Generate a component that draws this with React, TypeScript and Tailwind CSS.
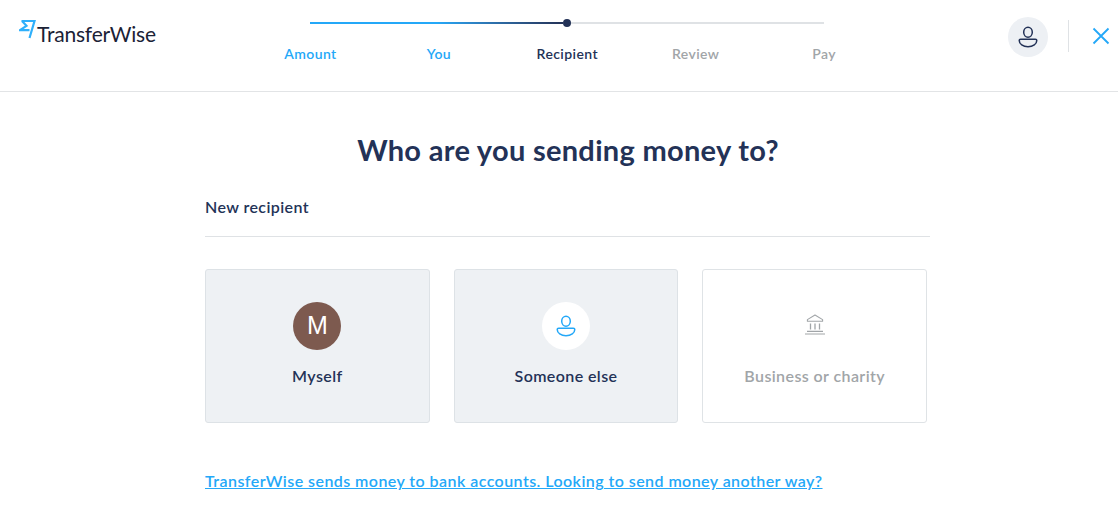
const font = { fontFamily: '"Lato", "Noto Sans", sans-serif' };

const steps = [
  { label: "Amount", className: "text-[#24a8f8]" },
  { label: "You", className: "text-[#24a8f8]" },
  { label: "Recipient", className: "text-[#233257]" },
  { label: "Review", className: "text-[#a1a5a8]" },
  { label: "Pay", className: "text-[#a1a5a8]" },
];

function PersonIcon({ className }: { className: string }) {
  return (
    <svg viewBox="0 0 20 22" fill="none" stroke="currentColor" strokeWidth="1.5" className={`h-[22px] w-5 ${className}`}>
      <ellipse cx="10" cy="6.3" rx="4.3" ry="5" />
      <path
        d="M2.6 13.2h14.8c.9 0 1.4.5 1.4 1.3 0 3.4-3.8 6.2-8.8 6.2s-8.8-2.8-8.8-6.2c0-.8.5-1.3 1.4-1.3z"
        strokeLinejoin="round"
      />
    </svg>
  );
}

function BankIcon() {
  return (
    <svg viewBox="0 0 20 21" fill="none" stroke="#a1a5a8" strokeWidth="1.1" className="mb-[4px] h-[21px] w-5">
      <path d="M10 1 2.4 5.6v1.6h15.2V5.6z" strokeLinejoin="round" />
      <path d="M5.5 9.5v6M10 9.5v6M14.5 9.5v6" strokeWidth="1.3" />
      <path d="M2 17.4h16M0 20h20" />
    </svg>
  );
}

function Card({
  title,
  active,
  children,
}: {
  title: string;
  active: boolean;
  children: React.ReactNode;
}) {
  return (
    <div
      className={`flex h-[154px] flex-col items-center rounded-[3px] border pt-[32px] ${
        active ? "border-[#dde2e6] bg-[#eef1f4]" : "border-[#dfe3e6] bg-white"
      }`}
    >
      <div className="flex h-12 w-12 items-center justify-center rounded-full">{children}</div>
      <div
        className={`mt-[14px] text-[16px] leading-6 font-semibold tracking-[0.4px] ${
          active ? "text-[#233257]" : "text-[#a1a5a8]"
        }`}
      >
        {title}
      </div>
    </div>
  );
}

export default function App() {
  return (
    <div className="h-[513px] w-[1118px] overflow-hidden bg-white" style={font}>
      <header className="flex h-[92px] border-b border-[#e2e4e6]">
        <div className="w-[245.75px] pt-[18px] pl-[19px]">
          <div className="flex items-start">
            <svg viewBox="0 0 18 20" className="mt-[1px] h-5 w-[18px]" fill="none" stroke="#2fb0fb" strokeWidth="2.2">
              <path d="M2.5 2h13L10.5 19M3 2l4.5 4.8L1 11.2h9.5" strokeLinejoin="miter" />
            </svg>
            <span className="mt-[3px] text-[21px] leading-[26px] font-normal tracking-[-0.2px] text-[#1b2236]">
              TransferWise
            </span>
          </div>
        </div>

        <div className="w-[642.5px] pt-[20px]">
          <div className="mx-[64.25px] flex h-[6px] items-center">
            <div className="h-[2px] w-[253px] bg-gradient-to-r from-[#24a8f8] from-50% to-[#233257]" />
            <div className="h-2 w-2 shrink-0 rounded-full bg-[#233257]" />
            <div className="h-[2px] flex-1 bg-[#dfe2e5]" />
          </div>
          <div className="mt-[18px] grid grid-cols-5 pl-[0.5px]">
            {steps.map((s) => (
              <div key={s.label} className={`text-center text-[14px] leading-5 font-semibold tracking-[0.4px] ${s.className}`}>
                {s.label}
              </div>
            ))}
          </div>
        </div>

        <div className="flex flex-1 items-start pt-[17px] pl-[119.75px]">
          <div className="flex h-10 w-10 items-center justify-center rounded-full bg-[#edf0f4]">
            <PersonIcon className="text-[#233257]" />
          </div>
          <div className="mt-[3px] ml-[20px] h-[32px] w-px bg-[#dfe2e5]" />
          <svg viewBox="0 0 18 18" className="mt-[10px] ml-[22.5px] h-[18px] w-[18px]" stroke="#24a8f8" strokeWidth="1.8" fill="none">
            <path d="M1.5 1.5l15 15M16.5 1.5l-15 15" />
          </svg>
        </div>
      </header>

      <main className="ml-[205px] w-[725px]">
        <h1 className="mt-[38px] pl-[1px] text-center text-[29px] leading-[40px] font-bold tracking-[0.3px] text-[#233257]">
          Who are you sending money to?
        </h1>
        <div className="mt-[25px] border-b border-[#dfe2e5] pb-[17px] text-[16px] leading-6 font-semibold tracking-[0.4px] text-[#233257]">
          New recipient
        </div>
        <div className="mt-[32px] grid w-[722px] grid-cols-3 gap-6">
          <Card title="Myself" active>
            <div
              className="flex h-12 w-12 items-center justify-center rounded-full bg-[#7d5a4f] text-[25px] text-white"
              style={{ fontFamily: '"Liberation Sans", sans-serif' }}
            >
              M
            </div>
          </Card>
          <Card title="Someone else" active>
            <div className="flex h-12 w-12 items-center justify-center rounded-full bg-white">
              <PersonIcon className="text-[#24a8f8]" />
            </div>
          </Card>
          <Card title="Business or charity" active={false}>
            <BankIcon />
          </Card>
        </div>
        <a href="#" className="mt-[46px] block text-[16px] leading-6 font-semibold tracking-[0.44px] text-[#24a8f8] underline">
          TransferWise sends money to bank accounts. Looking to send money another way?
        </a>
      </main>
    </div>
  );
}
